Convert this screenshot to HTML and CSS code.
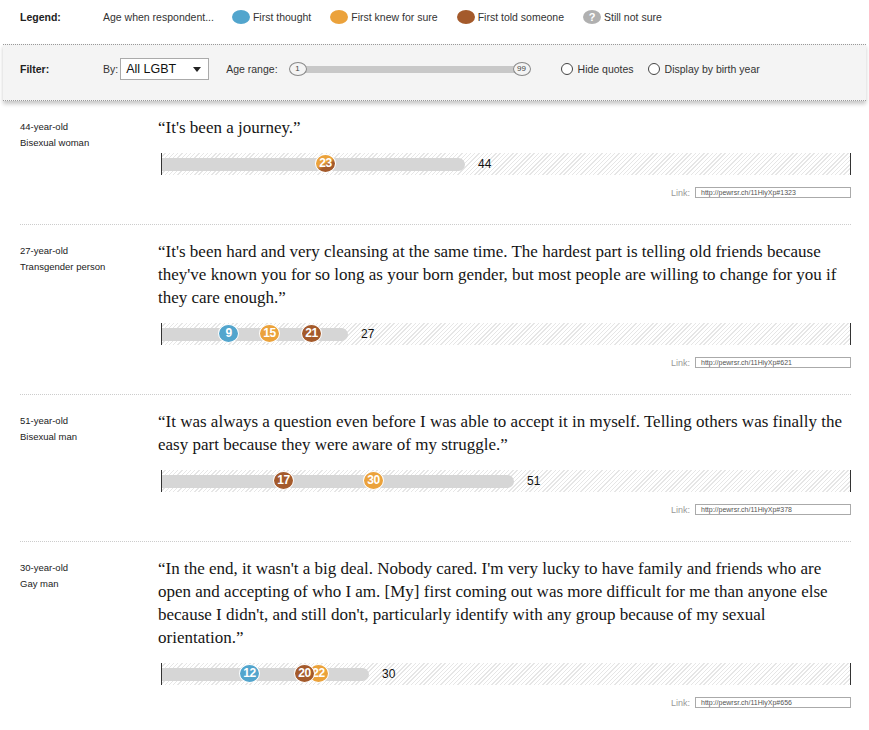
FILE: index.html
```
<!DOCTYPE html>
<html lang="en">
<head>
<meta charset="UTF-8">
<meta name="viewport" content="width=device-width, initial-scale=1.0">
<title>Coming out stories</title>
<link rel="stylesheet" href="styles.css">
</head>
<body>

<div class="legend">
    <span class="row-title">Legend:</span>
    <span class="legend-intro">Age when respondent...</span>
    <span class="legend-item"><span class="key thought"></span>First thought</span>
    <span class="legend-item"><span class="key knew"></span>First knew for sure</span>
    <span class="legend-item"><span class="key told"></span>First told someone</span>
    <span class="legend-item"><span class="key unsure">?</span>Still not sure</span>
</div>

<div class="filters">
    <span class="row-title">Filter:</span>
    <span class="filter-label">By:</span>
    <div class="dropdown"><span>All LGBT</span><span class="caret"></span></div>
    <span class="filter-label range-label">Age range:</span>
    <div class="slider">
        <span class="handle">1</span>
        <span class="slider-track"></span>
        <span class="handle">99</span>
    </div>
    <label class="radio first"><span class="radio-dot"></span>Hide quotes</label>
    <label class="radio"><span class="radio-dot"></span>Display by birth year</label>
</div>

<div class="stories">

    <div class="story">
        <div class="meta">
            <p>44-year-old</p>
            <p>Bisexual woman</p>
        </div>
        <div class="story-body">
            <p class="quote">“It's been a journey.”</p>
            <div class="chart">
                <div class="track">
                    <span class="bar" style="width: 303px"></span>
                    <span class="age">44</span>
                </div>
                <span class="dot both" style="left: 153px">23</span>
            </div>
            <div class="link-row">
                <span class="link-label">Link:</span>
                <span class="link-box">http://pewrsr.ch/11HiyXp#1323</span>
            </div>
        </div>
    </div>

    <div class="story">
        <div class="meta">
            <p>27-year-old</p>
            <p>Transgender person</p>
        </div>
        <div class="story-body">
            <p class="quote">“It's been hard and very cleansing at the same time. The hardest part is telling old friends because they've known you for so long as your born gender, but most people are willing to change for you if they care enough.”</p>
            <div class="chart">
                <div class="track">
                    <span class="bar" style="width: 186px"></span>
                    <span class="age">27</span>
                </div>
                <span class="dot thought" style="left: 56px">9</span>
                <span class="dot knew" style="left: 97px">15</span>
                <span class="dot told" style="left: 139px">21</span>
            </div>
            <div class="link-row">
                <span class="link-label">Link:</span>
                <span class="link-box">http://pewrsr.ch/11HiyXp#621</span>
            </div>
        </div>
    </div>

    <div class="story">
        <div class="meta">
            <p>51-year-old</p>
            <p>Bisexual man</p>
        </div>
        <div class="story-body">
            <p class="quote">“It was always a question even before I was able to accept it in myself. Telling others was finally the easy part because they were aware of my struggle.”</p>
            <div class="chart">
                <div class="track">
                    <span class="bar" style="width: 352px"></span>
                    <span class="age">51</span>
                </div>
                <span class="dot knew" style="left: 201px">30</span>
                <span class="dot told" style="left: 111px">17</span>
            </div>
            <div class="link-row">
                <span class="link-label">Link:</span>
                <span class="link-box">http://pewrsr.ch/11HiyXp#378</span>
            </div>
        </div>
    </div>

    <div class="story">
        <div class="meta">
            <p>30-year-old</p>
            <p>Gay man</p>
        </div>
        <div class="story-body">
            <p class="quote">“In the end, it wasn't a big deal. Nobody cared. I'm very lucky to have family and friends who are open and accepting of who I am. [My] first coming out was more difficult for me than anyone else because I didn't, and still don't, particularly identify with any group because of my sexual orientation.”</p>
            <div class="chart">
                <div class="track">
                    <span class="bar" style="width: 207px"></span>
                    <span class="age">30</span>
                </div>
                <span class="dot thought" style="left: 77px">12</span>
                <span class="dot knew" style="left: 146px">22</span>
                <span class="dot told" style="left: 132px">20</span>
            </div>
            <div class="link-row">
                <span class="link-label">Link:</span>
                <span class="link-box">http://pewrsr.ch/11HiyXp#656</span>
            </div>
        </div>
    </div>

</div>

</body>
</html>
```

FILE: styles.css
```
body {
    margin: 0;
    font-family: "Liberation Sans", Arial, sans-serif;
    color: #333;
    background: #fff;
}

p {
    margin: 0;
}

/* legend + filter bars */

.legend {
    display: flex;
    align-items: center;
    height: 34px;
    padding-left: 20px;
    font-size: 10.5px;
}

.row-title {
    width: 83px;
    font-weight: bold;
    color: #222;
}

.legend-intro {
    margin-right: 18px;
}

.legend-item {
    display: flex;
    align-items: center;
    margin-right: 19px;
}

.key {
    width: 18px;
    height: 14px;
    border-radius: 50%;
    margin-right: 3px;
    color: #fff;
    font-size: 11px;
    font-weight: bold;
    line-height: 14px;
    text-align: center;
}

.thought { background-color: #52a5cd; }
.knew { background-color: #eba23b; }
.told { background-color: #a45a2b; }
.unsure { background-color: #b0b0b0; }

.filters {
    display: flex;
    align-items: center;
    margin: 10px 3px 0;
    padding: 13px 0 20px 17px;
    height: 22px;
    background: #f4f4f4;
    border-top: 1px dotted #999;
    border-bottom: 1px dotted #999;
    box-shadow: 0 3px 4px rgba(0, 0, 0, 0.22);
    font-size: 10.5px;
}

.filter-label {
    margin-right: 2px;
}

.range-label {
    margin-left: 17px;
    margin-right: 11px;
}

.dropdown {
    display: flex;
    align-items: center;
    justify-content: space-between;
    box-sizing: border-box;
    width: 89px;
    height: 22px;
    padding: 0 5px 0 5px;
    background: #fff;
    border: 1px solid #aaa;
    font-size: 12.5px;
    color: #111;
}

.caret {
    width: 0;
    height: 0;
    border-left: 4px solid transparent;
    border-right: 4px solid transparent;
    border-top: 5px solid #222;
    margin-right: 2px;
}

.slider {
    display: flex;
    align-items: center;
    width: 242px;
}

.handle {
    position: relative;
    z-index: 1;
    box-sizing: border-box;
    min-width: 18px;
    height: 14px;
    padding: 0 3px;
    border: 1px solid #888;
    border-radius: 50%;
    background: #f4f4f4;
    font-size: 8px;
    line-height: 12px;
    text-align: center;
    color: #444;
}

.slider-track {
    flex: 1;
    height: 7px;
    margin: 0 -2px;
    background: #c8c8c8;
}

.radio {
    display: flex;
    align-items: center;
    margin-left: 14px;
}

.radio.first {
    margin-left: 30px;
}

.radio-dot {
    box-sizing: border-box;
    width: 12px;
    height: 12px;
    margin-right: 5px;
    border: 1px solid #444;
    border-radius: 50%;
    background: #fff;
}

/* story list */

.stories {
    margin: 0 18px 0 20px;
}

.story {
    display: flex;
    padding: 15px 0 26px;
    border-bottom: 1px dotted #ccc;
}

.story:last-child {
    border-bottom: none;
}

.meta {
    width: 138px;
    flex-shrink: 0;
    padding-top: 3px;
    font-size: 9.5px;
    line-height: 16px;
    color: #222;
}

.story-body {
    flex: 1;
}

.quote {
    font-family: "Liberation Serif", "Times New Roman", serif;
    font-size: 17px;
    line-height: 23px;
    color: #151515;
}

.chart {
    position: relative;
    box-sizing: border-box;
    width: 690px;
    height: 22px;
    margin: 14px 0 0 3px;
    border-left: 1px solid #333;
    border-right: 1px solid #333;
    background: repeating-linear-gradient(135deg, #fff 0 2px, #e6e6e6 2px 3px);
}

.track {
    display: flex;
    align-items: center;
    height: 22px;
}

.bar {
    height: 13px;
    background: #d6d6d6;
    border-radius: 0 7px 7px 0;
}

.age {
    margin-left: 13px;
    font-size: 12px;
    color: #111;
}

.dot {
    position: absolute;
    top: 1px;
    box-sizing: border-box;
    width: 21px;
    height: 19px;
    border: 1.5px solid #fff;
    border-radius: 50%;
    color: #fff;
    font-size: 12px;
    font-weight: bold;
    line-height: 16px;
    text-align: center;
    letter-spacing: -0.5px;
}

.dot.both {
    background: linear-gradient(150deg, #eba23b 45%, #a45a2b 62%);
}

.link-row {
    display: flex;
    justify-content: flex-end;
    align-items: center;
    margin-top: 12px;
}

.link-label {
    margin-right: 5px;
    font-size: 9px;
    color: #999;
}

.link-box {
    box-sizing: border-box;
    width: 156px;
    height: 11px;
    padding-left: 5px;
    border: 1px solid #aaa;
    font-size: 7px;
    line-height: 9px;
    color: #555;
}
```
